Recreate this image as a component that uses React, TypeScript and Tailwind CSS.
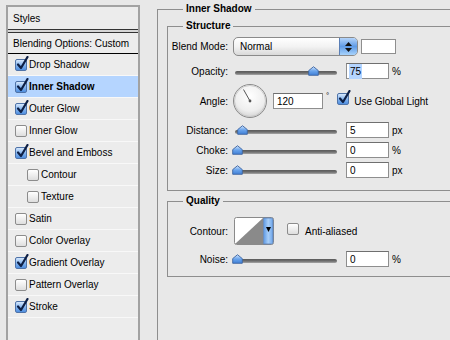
import { ReactNode } from "react";

const styleRows = [
  { label: "Drop Shadow", on: true },
  { label: "Inner Shadow", on: true, selected: true },
  { label: "Outer Glow", on: true },
  { label: "Inner Glow", on: false },
  { label: "Bevel and Emboss", on: true },
  { label: "Contour", on: false, sub: true },
  { label: "Texture", on: false, sub: true },
  { label: "Satin", on: false },
  { label: "Color Overlay", on: false },
  { label: "Gradient Overlay", on: true },
  { label: "Pattern Overlay", on: false },
  { label: "Stroke", on: true },
];

function Checkbox({ on }: { on: boolean }) {
  return (
    <span className="relative inline-block w-[12px] h-[12px] shrink-0">
      <span
        className={
          on
            ? "absolute inset-0 rounded-[2px] border border-[#4f73a8] bg-linear-to-b from-[#d6e8fd] via-[#87b6ef] to-[#4f8fe0]"
            : "absolute inset-0 rounded-[2px] border border-[#8c8c8c] bg-linear-to-b from-white to-[#dedede]"
        }
      />
      {on && (
        <svg className="absolute left-[1px] top-[-3px]" width="13" height="14" viewBox="0 0 13 14">
          <path d="M2 8.5 L5 12 L11.5 1" fill="none" stroke="#0d1f45" strokeWidth="2.2" strokeLinecap="round" strokeLinejoin="round" />
        </svg>
      )}
    </span>
  );
}

function Thumb() {
  return (
    <svg width="11" height="10" viewBox="0 0 11 10">
      <defs>
        <linearGradient id="thumbG" x1="0" y1="0" x2="0" y2="1">
          <stop offset="0" stopColor="#cfe4fc" />
          <stop offset="0.5" stopColor="#6aa4ec" />
          <stop offset="1" stopColor="#3f7fd6" />
        </linearGradient>
      </defs>
      <path d="M5.5 0.7 L10.3 4.6 L10.3 9.3 L0.7 9.3 L0.7 4.6 Z" fill="url(#thumbG)" stroke="#3d64a0" strokeWidth="0.9" strokeLinejoin="round" />
    </svg>
  );
}

function Slider({ pos }: { pos: number }) {
  return (
    <div className="relative w-[104px] h-[16px]">
      <div className="absolute left-[2px] right-0 top-[8px] h-[4px] rounded-full bg-linear-to-b from-[#5a5a5a] via-[#6e6e6e] to-[#a8a8a8]" />
      <div className="absolute top-[3px]" style={{ left: pos - 5 }}>
        <Thumb />
      </div>
    </div>
  );
}

function Field({ value, selected, w = "w-[43px]" }: { value: string; selected?: boolean; w?: string }) {
  return (
    <div className={`${w} h-[16px] bg-white border border-[#8e8e8e] border-t-[#6f6f6f] flex items-center pl-[2px] text-[10px]`}>
      <span className={selected ? "bg-[#b5d5ff] px-[1px]" : "px-[1px]"}>{value}</span>
    </div>
  );
}

function Row({ label, children, h = "h-[16px]", mt }: { label: string; children: ReactNode; h?: string; mt: string }) {
  return (
    <div className={`flex items-center ${h} ${mt}`}>
      <span className="w-[60px] text-right shrink-0">{label}</span>
      {children}
    </div>
  );
}

function SliderRow({ label, pos, value, unit, mt, selected }: { label: string; pos: number; value: string; unit: string; mt: string; selected?: boolean }) {
  return (
    <Row label={label} mt={mt}>
      <div className="ml-[5px]">
        <Slider pos={pos} />
      </div>
      <div className="ml-[9px]">
        <Field value={value} selected={selected} />
      </div>
      <span className="ml-[3px]">{unit}</span>
    </Row>
  );
}

function Legend({ children, ml = "ml-[16px]" }: { children: ReactNode; ml?: string }) {
  return <legend className={`${ml} px-[3px] text-[10px] leading-[14px] font-bold`}>{children}</legend>;
}

function Dial() {
  return (
    <svg width="36" height="36" viewBox="0 0 36 36">
      <defs>
        <radialGradient id="dialG" cx="0.5" cy="0.35" r="0.65">
          <stop offset="0" stopColor="#ffffff" />
          <stop offset="0.7" stopColor="#eeeeee" />
          <stop offset="1" stopColor="#d2d2d2" />
        </radialGradient>
      </defs>
      <circle cx="18" cy="18" r="16.5" fill="url(#dialG)" stroke="#8a8a8a" strokeWidth="1" />
      <circle cx="18" cy="18" r="15.5" fill="none" stroke="#c4c4c4" strokeWidth="0.8" />
      <line x1="18" y1="18" x2="11.5" y2="6.5" stroke="#555" strokeWidth="1" />
      <circle cx="18" cy="18" r="1.4" fill="#555" />
    </svg>
  );
}

function BlendSelect() {
  return (
    <div className="flex w-[125px] h-[19px] rounded-[5px] border border-[#8a8a8a] bg-linear-to-b from-white via-[#f3f3f3] to-[#d9d9d9] overflow-hidden">
      <span className="flex-1 pl-[6px] flex items-center">Normal</span>
      <span className="w-[18px] border-l border-[#5a7fb6] bg-linear-to-b from-[#b4d4fa] via-[#5f9be6] to-[#a8d3fb] flex flex-col items-center justify-center gap-[2px]">
        <svg width="7" height="4" viewBox="0 0 7 4">
          <path d="M3.5 0 L7 4 L0 4 Z" fill="#111" />
        </svg>
        <svg width="7" height="4" viewBox="0 0 7 4">
          <path d="M0 0 L7 0 L3.5 4 Z" fill="#111" />
        </svg>
      </span>
    </div>
  );
}

function ContourPicker() {
  return (
    <svg width="40" height="28" viewBox="0 0 40 28">
      <defs>
        <linearGradient id="ctG" x1="0" y1="0" x2="1" y2="0">
          <stop offset="0" stopColor="#5c98e4" />
          <stop offset="0.5" stopColor="#a9cff8" />
          <stop offset="1" stopColor="#6aa3ea" />
        </linearGradient>
      </defs>
      <rect x="0.5" y="0.5" width="39" height="27" rx="2" fill="#fff" stroke="#8a8a8a" />
      <path d="M1 27 L29 1 L29 27 Z" fill="#8a8a8a" />
      <path d="M29.5 1 H37.5 Q39 1 39 3 V25 Q39 27 37.5 27 H29.5 Z" fill="url(#ctG)" stroke="#5d7fb0" strokeWidth="0.8" />
      <path d="M32 10 L37 10 L34.5 15 Z" fill="#000" />
    </svg>
  );
}

export default function App() {
  return (
    <div className="w-[450px] h-[340px] overflow-hidden bg-[#e8e8e8] flex font-['Liberation_Sans',Arial,sans-serif] text-[10px] text-black">
      {/* styles list */}
      <div className="ml-[6px] mt-[5px] w-[134px] h-[340px] shrink-0 border-2 border-b-0 border-[#a2a2a2] bg-[#ececec] flex flex-col">
        <div className="h-[22px] pl-[5px] flex items-center">Styles</div>
        <div className="h-[4px] border-y border-[#333] bg-[#d6d6d6]" />
        <div className="h-[21px] pl-[5px] flex items-center border-b border-black">Blending Options: Custom</div>
        {styleRows.map((r) => (
          <div
            key={r.label}
            className={`h-[22px] flex items-center gap-[2px] border-b border-[#f8f8f8] ${r.sub ? "pl-[19px]" : "pl-[7px]"} ${
              r.selected ? "bg-[#b5d5ff] font-bold" : ""
            }`}
          >
            <Checkbox on={r.on} />
            <span>{r.label}</span>
          </div>
        ))}
      </div>

      {/* settings */}
      <div className="ml-[17px] mt-[2px] w-[320px] shrink-0">
        <fieldset className="border border-[#8e8e8e] h-[420px] pl-[9px]">
          <Legend>Inner Shadow</Legend>
          <fieldset className="mt-[3px] w-[320px] border border-[#8e8e8e] pt-[4px] pb-[12px]">
            <Legend ml="ml-[15px]">Structure</Legend>
            <Row label="Blend Mode:" h="h-[19px]" mt="mt-0">
              <div className="ml-[5px]">
                <BlendSelect />
              </div>
              <div className="ml-[3px] w-[35px] h-[15px] bg-white border border-[#8e8e8e]" />
            </Row>
            <SliderRow label="Opacity:" pos={80} value="75" unit="%" mt="mt-[7px]" selected />
            <Row label="Angle:" h="h-[34px]" mt="mt-[5px]">
              <div className="ml-[4px]">
                <Dial />
              </div>
              <div className="ml-[5px]">
                <Field value="120" w="w-[50px]" />
              </div>
              <span className="ml-[3px] self-start mt-[6px] text-[8px]">°</span>
              <div className="ml-[8px]">
                <Checkbox on />
              </div>
              <span className="ml-[5px]">Use Global Light</span>
            </Row>
            <SliderRow label="Distance:" pos={9} value="5" unit="px" mt="mt-[4px]" />
            <SliderRow label="Choke:" pos={4} value="0" unit="%" mt="mt-[4px]" />
            <SliderRow label="Size:" pos={4} value="0" unit="px" mt="mt-[4px]" />
          </fieldset>
          <fieldset className="mt-[3px] w-[320px] border border-[#8e8e8e] pb-[9px]">
            <Legend ml="ml-[15px]">Quality</Legend>
            <Row label="Contour:" h="h-[28px]" mt="mt-[9px]">
              <div className="ml-[6px]">
                <ContourPicker />
              </div>
              <div className="ml-[13px]">
                <Checkbox on={false} />
              </div>
              <span className="ml-[6px]">Anti-aliased</span>
            </Row>
            <SliderRow label="Noise:" pos={4} value="0" unit="%" mt="mt-[6px]" />
          </fieldset>
        </fieldset>
      </div>
    </div>
  );
}
